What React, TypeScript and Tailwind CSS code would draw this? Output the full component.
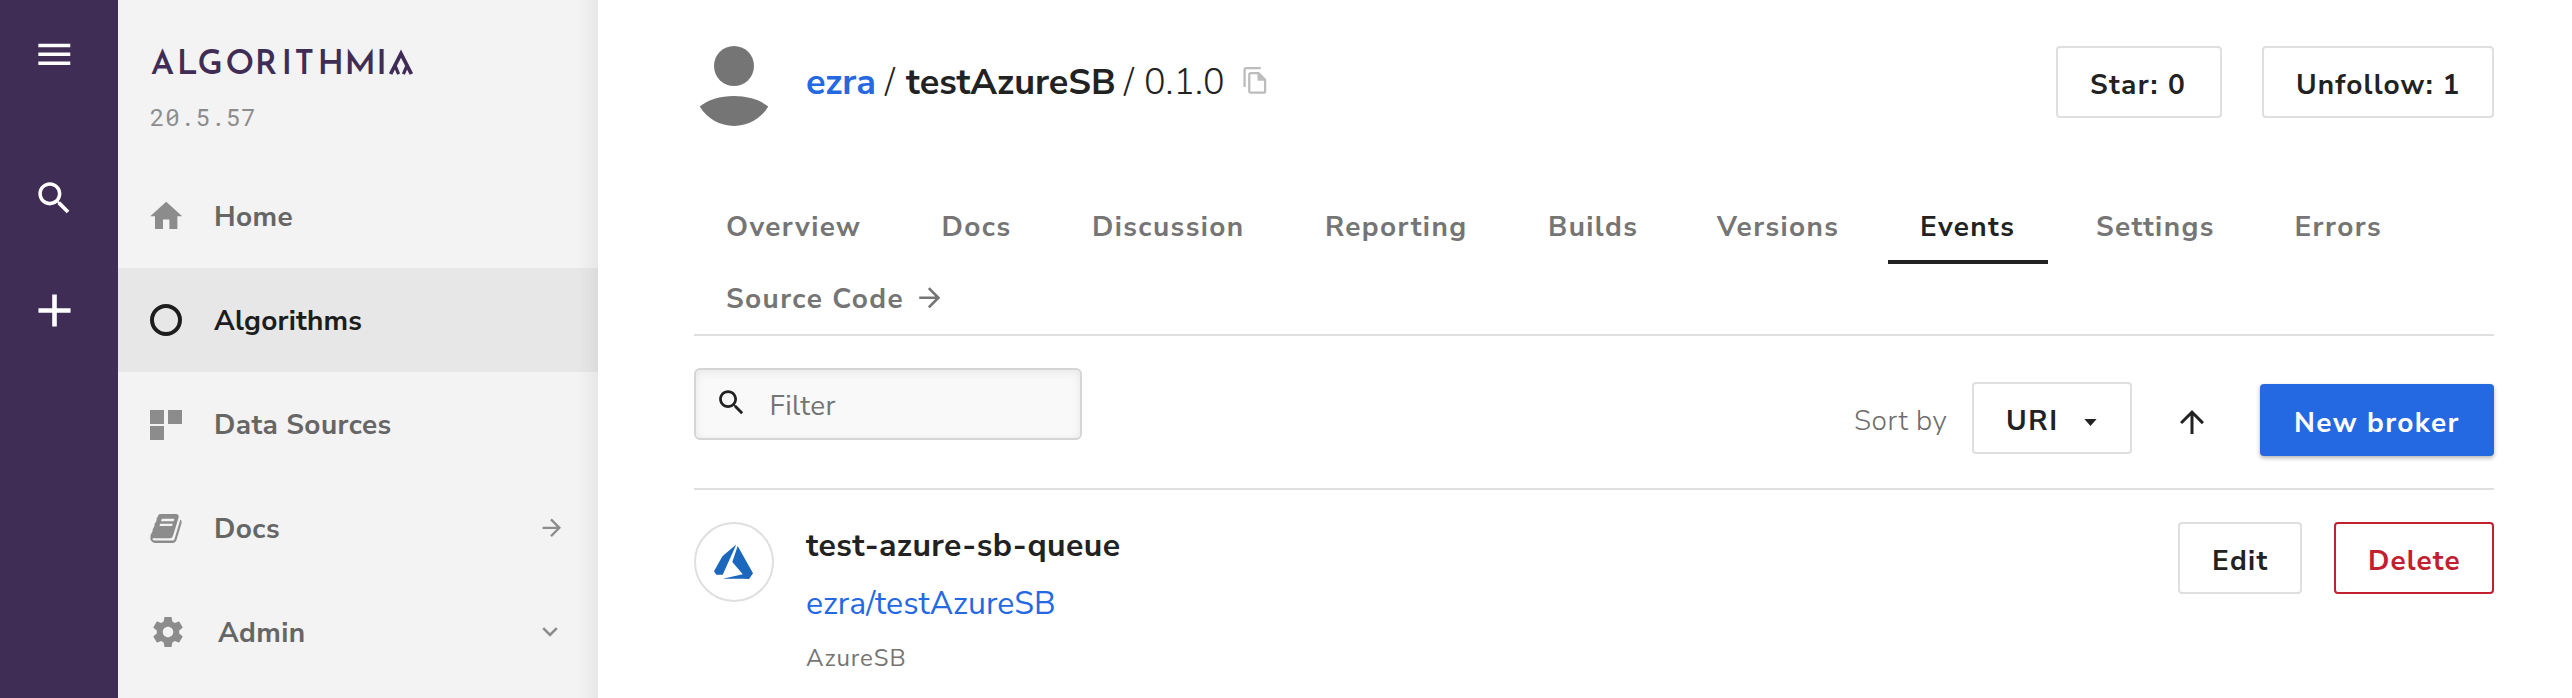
import type { ReactNode } from "react";

type IconProps = { d: string; className: string };

function Icon({ d, className }: IconProps) {
  return (
    <svg viewBox="0 0 24 24" fill="currentColor" aria-hidden="true" className={`shrink-0 ${className}`}>
      <path d={d} />
    </svg>
  );
}

const MENU = "M3 18h18v-2H3v2zm0-5h18v-2H3v2zm0-7v2h18V6H3z";
const SEARCH =
  "M15.5 14h-.79l-.28-.27C15.41 12.59 16 11.11 16 9.5 16 5.91 13.09 3 9.5 3S3 5.91 3 9.5 5.91 16 9.5 16c1.61 0 3.09-.59 4.23-1.57l.27.28v.79l5 4.99L20.49 19l-4.99-5zm-6 0C7.01 14 5 11.99 5 9.5S7.01 5 9.5 5 14 7.01 14 9.5 11.99 14 9.5 14z";
const ADD = "M19 13h-6v6h-2v-6H5v-2h6V5h2v6h6v2z";
const HOME = "M10 20v-6h4v6h5v-8h3L12 3 2 12h3v8z";
const SETTINGS =
  "M19.43 12.98c.04-.32.07-.64.07-.98s-.03-.66-.07-.98l2.11-1.65c.19-.15.24-.42.12-.64l-2-3.46c-.12-.22-.39-.3-.61-.22l-2.49 1c-.52-.4-1.08-.73-1.69-.98l-.38-2.65C14.46 2.18 14.25 2 14 2h-4c-.25 0-.46.18-.49.42l-.38 2.65c-.61.25-1.17.59-1.69.98l-2.49-1c-.23-.09-.49 0-.61.22l-2 3.46c-.13.22-.07.49.12.64l2.11 1.65c-.04.32-.07.65-.07.98s.03.66.07.98l-2.11 1.65c-.19.15-.24.42-.12.64l2 3.46c.12.22.39.3.61.22l2.49-1c.52.4 1.08.73 1.69.98l.38 2.65c.03.24.24.42.49.42h4c.25 0 .46-.18.49-.42l.38-2.65c.61-.25 1.17-.59 1.69-.98l2.49 1c.23.09.49 0 .61-.22l2-3.46c.12-.22.07-.49-.12-.64l-2.11-1.65zM12 15.5c-1.93 0-3.5-1.57-3.5-3.5s1.57-3.5 3.5-3.5 3.5 1.57 3.5 3.5-1.57 3.5-3.5 3.5z";
const ARROW_RIGHT = "M12 4l-1.41 1.41L16.17 11H4v2h12.17l-5.58 5.59L12 20l8-8z";
const ARROW_UP = "M4 12l1.41 1.41L11 7.83V20h2V7.83l5.58 5.59L20 12l-8-8-8 8z";
const BOOK =
  "M1639 478q40 57 18 129l-275 906q-19 64-76.5 107.5t-122.5 43.5h-923q-77 0-148.5-53.5t-99.5-131.5q-24-67-2-127 0-4 3-27t4-37q1-8-3-21.5t-3-19.5q2-11 8-21t16.5-23.5 16.5-23.5q23-38 45-91.5t30-91.5q3-10 .5-30t-.5-28q3-11 17-28t17-23q21-36 42-92t25-90q1-9-2.5-32t.5-28q4-13 22-30.5t22-22.5q19-26 42.5-84.5t27.5-96.5q1-8-3-25.5t-2-26.5q2-8 9-18t18-23 17-21q8-12 16.5-30.5t15-35 16-36 19.5-32 26.5-23.5 36-11.5 47.5 5.5l-1 3q38-9 51-9h761q74 0 114 56t18 130l-274 906q-36 119-71.5 153.5t-128.5 34.5h-869q-27 0-38 15-11 16-1 43 24 70 144 70h923q29 0 56-15.5t35-41.5l300-987q7-22 5-57 38 15 59 43zm-1064 2q-4 13 2 22.5t20 9.5h608q13 0 25.5-9.5t16.5-22.5l21-64q4-13-2-22.5t-20-9.5h-608q-13 0-25.5 9.5t-16.5 22.5zm-83 256q-4 13 2 22.5t20 9.5h608q13 0 25.5-9.5t16.5-22.5l21-64q4-13-2-22.5t-20-9.5h-608q-13 0-25.5 9.5t-16.5 22.5z";

function Rail() {
  return (
    <nav className="flex w-[118px] shrink-0 flex-col items-center bg-[#3f2d56] text-white pr-[10px]">
      <button className="mt-[33px]" aria-label="Menu">
        <Icon d={MENU} className="size-[42.6px]" />
      </button>
      <button className="mt-[101px]" aria-label="Search">
        <Icon d={SEARCH} className="size-[42.6px]" />
      </button>
      <button className="mt-[64px]" aria-label="Add">
        <Icon d={ADD} className="size-[55px]" />
      </button>
    </nav>
  );
}

function Wordmark() {
  return (
    <svg viewBox="0 0 266 44" className="h-11 w-[266px] overflow-visible text-[#3f2d56]" role="img">
      <text
        x="0.8 26.8 47.6 75.6 104.8 131.4 144.6 167.4 194.4 226.2"
        y="28"
        className="fill-current font-['Josefin_Sans','Lato',sans-serif] text-[33.5px] font-semibold"
      >
        ALGORITHMI
      </text>
      <g fill="none" stroke="currentColor" strokeWidth="3.8">
        <path d="M240.6 28 L251 7.6 L261.4 28" />
        <path d="M244.6 18.5 L248.600 28.2 M257.4 18.5 L253.400 28.2" strokeWidth="3.2" />
      </g>
    </svg>
  );
}

type NavItemProps = { icon: ReactNode; label: string; active?: boolean; indent?: boolean; end?: ReactNode };

function NavItem({ icon, label, active, indent, end }: NavItemProps) {
  return (
    <a
      className={`flex h-[104px] items-center pl-8 pr-[36px] ${
        active ? "bg-[#e7e7e7] text-[#1d1d1d]" : "text-[#666666]"
      }`}
    >
      <span className={`flex w-8 shrink-0 items-center justify-center ${indent ? "mr-9" : "mr-8"} ${active ? "" : "text-[#8c8c8c]"}`}>
        {icon}
      </span>
      <span className={`flex-1 pt-[2px] text-[28px] leading-9 font-bold whitespace-nowrap ${active ? "tracking-[0.2px]" : "tracking-[0.4px]"}`}>
        {label}
      </span>
      {end}
    </a>
  );
}

function Sidebar() {
  return (
    <aside className="relative flex w-[480px] shrink-0 flex-col bg-[#f3f3f3]">
      <div className="h-[164px] pl-8 pt-[46px]">
        <Wordmark />
        <div className="mt-[7px] font-['Roboto_Mono','Liberation_Mono',monospace] text-[24px] leading-10 tracking-[0.77px] text-[#8c8c8c]">
          20.5.57
        </div>
      </div>
      <NavItem icon={<Icon d={HOME} className="size-[38.4px]" />} label="Home" />
      <NavItem icon={<span className="size-8 rounded-full border-4 border-current" />} label="Algorithms" active />
      <NavItem
        icon={
          <span className="mt-[2px] grid grid-cols-2 gap-x-1 gap-y-[2px]">
            <span className="size-[14px] bg-current" />
            <span className="size-[14px] bg-current" />
            <span className="size-[14px] bg-current" />
          </span>
        }
        label="Data Sources"
      />
      <NavItem
        icon={
          <svg viewBox="0 128 1664 1536" fill="currentColor" className="h-[29px] w-8 shrink-0">
            <path d={BOOK} />
          </svg>
        }
        label="Docs"
        end={<Icon d={ARROW_RIGHT} className="mr-[-4px] size-[27.6px] text-[#8c8c8c]" />}
      />
      <NavItem
        icon={<Icon d={SETTINGS} className="ml-[3px] size-[36px]" />}
        label="Admin"
        indent
        end={
          <svg viewBox="0 0 16 10" fill="none" stroke="currentColor" strokeWidth="2.6" className="mr-[4px] h-[10px] w-4 text-[#8c8c8c]">
            <path d="M1.2 1.2 8 8l6.8-6.8" />
          </svg>
        }
      />
      <div className="pointer-events-none absolute inset-y-0 right-0 w-5 bg-gradient-to-l from-black/5 to-transparent" />
    </aside>
  );
}

function CopyIcon() {
  return (
    <svg viewBox="0 0 24 24" className="size-[28.8px] text-[#bcbcbc]" fill="none" stroke="currentColor" strokeWidth="1.9">
      <path d="M3 17.5V3a1.2 1.2 0 0 1 1.2-1.2H16.5" />
      <path d="M6.9 7.1a1.2 1.2 0 0 1 1.2-1.2H14.6L20.1 11.4V21a1.2 1.2 0 0 1-1.2 1.2H8.100a1.2 1.2 0 0 1-1.2-1.2z" />
      <path d="M13.800 5.500 20.500 12.200H13.800z" fill="currentColor" stroke="none" />
    </svg>
  );
}

function Header() {
  return (
    <header className="flex h-20 items-start">
      <svg viewBox="0 0 80 80" className="size-20 shrink-0 text-[#757575]" fill="currentColor">
        <circle cx="40" cy="20" r="20" />
        <path d="M5.7 60.500C14 54 26 50 40 50s26 4 34.3 10.500A40 40 0 0 1 5.7 60.500z" />
      </svg>
      <h1 className="ml-8 mt-[13px] flex flex-1 text-[36px] font-[350] leading-[48px] text-[#222222] whitespace-nowrap">
        <a className="w-[79px] font-bold text-[#2468e2]">ezra</a>
        <span className="w-[21px]">/</span>
        <span className="w-[218px] font-bold">testAzureSB</span>
        <span className="w-[20px]">/</span>
        <span className="w-[97px]">0.1.0</span>
        <span className="mt-[7px]">
          <CopyIcon />
        </span>
      </h1>
      <div className="flex gap-10">
        <Button className="w-[166px] border-[#dfdfdf] tracking-[1.4px] text-[#222222]">Star: 0</Button>
        <Button className="w-[232px] border-[#dfdfdf] tracking-[1.15px] text-[#222222]">Unfollow: 1</Button>
      </div>
    </header>
  );
}

function Button({ className, children }: { className: string; children: ReactNode }) {
  return (
    <button
      className={`flex h-[72px] items-center rounded-[4px] border-2 pl-8 pt-[6px] text-[28px] font-bold leading-9 whitespace-nowrap ${className}`}
    >
      {children}
    </button>
  );
}

const TABS: { label: string; width: string; active?: boolean }[] = [
  { label: "Overview", width: "w-[199.5px]" },
  { label: "Docs", width: "w-[134.5px]" },
  { label: "Discussion", width: "w-[217px]" },
  { label: "Reporting", width: "w-[207px]" },
  { label: "Builds", width: "w-[153px]" },
  { label: "Versions", width: "w-[187px]" },
  { label: "Events", width: "w-[160px]", active: true },
  { label: "Settings", width: "w-[182.5px]" },
  { label: "Errors", width: "w-[150px]" },
];

function Tabs() {
  const tab = "flex h-[72px] items-center border-b-4 pt-[2px] text-[28px] font-bold leading-9 tracking-[1.4px] whitespace-nowrap";
  return (
    <div className="mt-[66px] flex h-[144px] flex-wrap gap-x-4 border-b-2 border-[#dfdfdf]">
      {TABS.map((t) => (
        <a
          key={t.label}
          className={`${tab} pl-8 ${t.width} ${t.active ? "border-[#222222] text-[#222222]" : "border-transparent text-[#757575]"}`}
        >
          {t.label}
        </a>
      ))}
      <a className={`${tab} border-transparent pl-8 text-[#757575]`}>
        <span className="w-[187.5px]">Source Code</span>
        <Icon d={ARROW_RIGHT} className="mt-[-2px] size-[31.5px]" />
      </a>
    </div>
  );
}

function Toolbar() {
  return (
    <div className="flex h-[154px] items-start border-b-2 border-[#dfdfdf]">
      <label className="mt-8 flex h-[72px] w-[388px] items-center rounded-[6px] border-2 border-[#d5d5d5] bg-[#f9f9f9] pl-[19px] shadow-[inset_0_2px_10px_rgba(0,0,0,0.08)]">
        <Icon d={SEARCH} className="mt-[-4px] size-[33px] text-[#222222]" />
        <span className="ml-[21.5px] pt-[3px] text-[28px] leading-9 tracking-[0.3px] text-[#757575]">Filter</span>
      </label>
      <div className="ml-auto flex items-start">
        <span className="mt-[67px] w-[118px] text-[28px] font-[350] leading-9 tracking-[0.6px] text-[#6c6c6c]">Sort by</span>
        <button className="mt-[46px] flex h-[72px] w-40 items-center rounded-[4px] border-2 border-[#dfdfdf] pl-8 text-[28px] font-bold leading-9 text-[#222222]">
          <span className="w-[78px] pt-[6px] text-left tracking-[1.7px]">URI</span>
          <svg viewBox="0 0 14 8" className="mt-[9px] h-[7px] w-[13px]" fill="currentColor">
            <path d="M0 0h14L7 8z" />
          </svg>
        </button>
        <Icon d={ARROW_UP} className="ml-[42px] mt-[68px] size-9 text-[#222222]" />
        <Button className="ml-[50px] mt-12 w-[234px] border-[#2468e2] bg-[#2468e2] tracking-[1.4px] text-white shadow-[0_2px_4px_rgba(0,0,0,0.3)]">
          New broker
        </Button>
      </div>
    </div>
  );
}

function BrokerRow() {
  return (
    <section className="flex items-start pt-8">
      <svg viewBox="0 0 80 80" className="size-20 shrink-0">
        <circle cx="40" cy="40" r="39" fill="white" stroke="#dfdfdf" strokeWidth="2" />
        <g fill="#1a67bd">
          <path d="M42.3 22.5 28.6 34 20 49.2l2.3 3.5h6.4z" />
          <path d="M43.7 24 38.3 40l10.5 12.2L28.7 56.7h20L55 57l4-5.7z" />
        </g>
      </svg>
      <div className="ml-8 flex-1">
        <div className="text-[32px] font-bold leading-[47px] tracking-[0.4px] text-[#222222]">test-azure-sb-queue</div>
        <div className="text-[32px] leading-[69px] tracking-[0.05px] text-[#2468e2]">ezra/testAzureSB</div>
        <div className="text-[24px] leading-10 tracking-[0.9px] text-[#757575]">AzureSB</div>
      </div>
      <div className="flex gap-8">
        <Button className="w-[124px] border-[#dfdfdf] tracking-[1.3px] text-[#222222]">Edit</Button>
        <Button className="w-40 border-[#c1202f] tracking-[1.1px] text-[#c1202f]">Delete</Button>
      </div>
    </section>
  );
}

export default function App() {
  return (
    <div className="flex h-[698px] w-[2572px] overflow-hidden bg-white font-['Nunito_Sans','Nunito','Lato',sans-serif]">
      <Rail />
      <Sidebar />
      <main className="flex-1 pl-24 pr-[78px] pt-[46px]">
        <Header />
        <Tabs />
        <Toolbar />
        <BrokerRow />
      </main>
    </div>
  );
}
